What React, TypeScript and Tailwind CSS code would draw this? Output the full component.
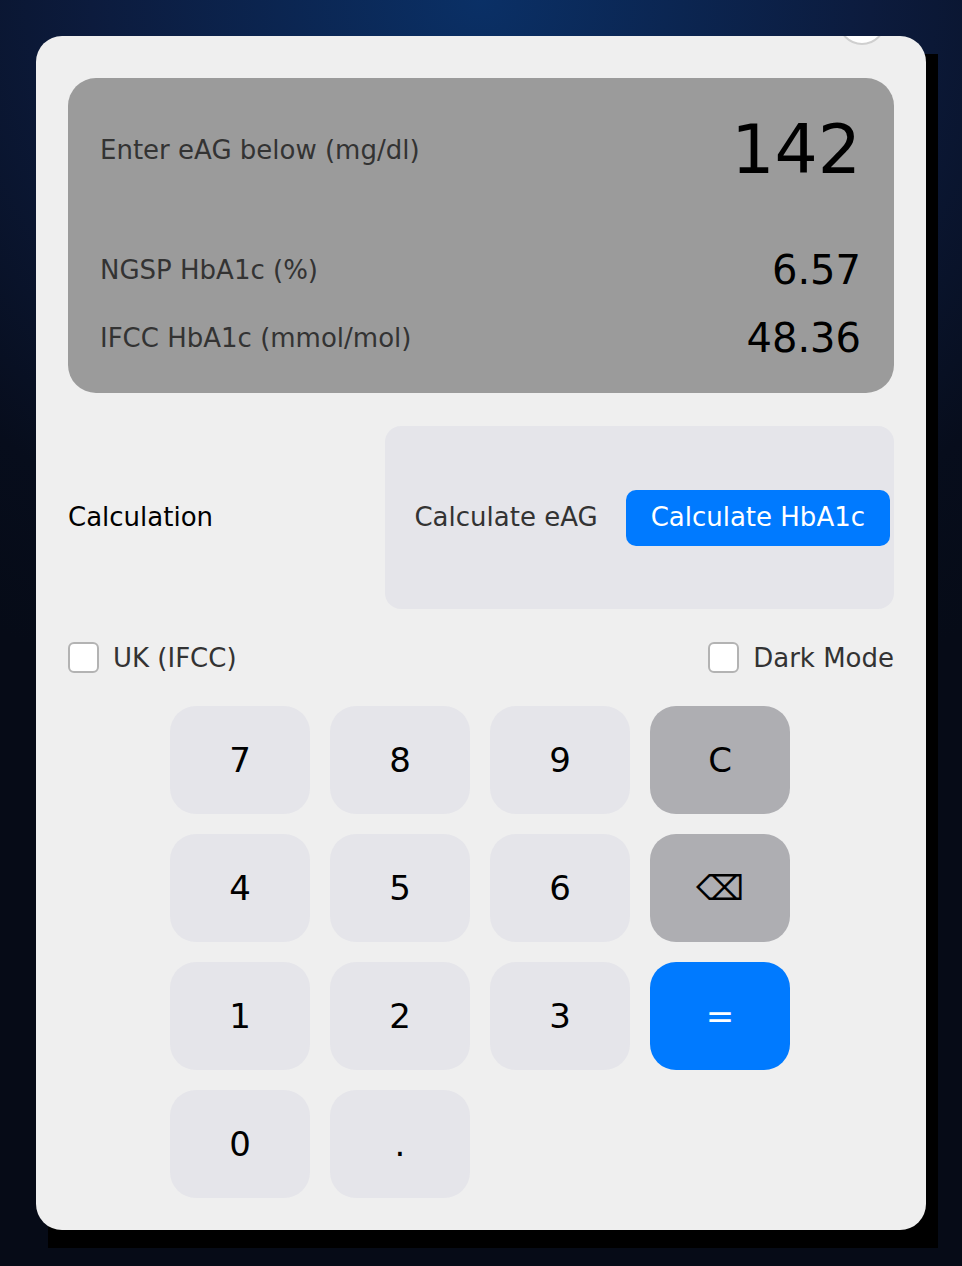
import { useState } from 'react';

const keys = ['7', '8', '9', 'C', '4', '5', '6', '⌫', '1', '2', '3', '=', '0', '.'];

export default function App() {
  const [mode, setMode] = useState<'eag' | 'hba1c'>('hba1c');
  const [uk, setUk] = useState(false);
  const [dark, setDark] = useState(false);

  const keyClass = (k: string) => {
    if (k === 'C' || k === '⌫') return 'bg-[#aeaeb2] text-black';
    if (k === '=') return 'bg-[#007aff] text-white';
    return 'bg-[#e5e5ea] text-black';
  };

  return (
    <div className="min-h-screen w-full bg-[radial-gradient(ellipse_90%_60%_at_50%_0%,#0a3066_0%,#0c1b3d_45%,#070d1c_80%,#060b17_100%)] pt-[36px] pb-[18px] font-['DejaVu_Sans',sans-serif]">
      <div className="relative mx-auto w-[890px]">
        {/* hard shadow block */}
        <div className="absolute left-[12px] top-[18px] h-full w-full bg-black" />

        <div className="relative overflow-hidden rounded-[26px] bg-[#efefef] px-[32px] pt-[42px] pb-[32px]">
          <div className="absolute right-[40px] top-[-39px] h-12 w-12 rounded-full border-2 border-[#cfcfcf] bg-white" />

          {/* display */}
          <div className="rounded-[28px] bg-[#9b9b9b] pl-[32px] pr-[33px] pt-[22px] pb-[30px]">
            <div className="flex h-[100px] items-center justify-between">
              <span className="text-[26px] text-[#333]">Enter eAG below (mg/dl)</span>
              <span className="text-[68px] leading-none text-black">142</span>
            </div>
            <div className="mt-[45px] flex h-[50px] items-center justify-between">
              <span className="text-[26px] text-[#333]">NGSP HbA1c (%)</span>
              <span className="text-[40px] leading-none text-black">6.57</span>
            </div>
            <div className="mt-[18px] flex h-[50px] items-center justify-between">
              <span className="text-[26px] text-[#333]">IFCC HbA1c (mmol/mol)</span>
              <span className="text-[40px] leading-none text-black">48.36</span>
            </div>
          </div>

          {/* calculation */}
          <div className="mt-[33px] flex items-center justify-between">
            <span className="text-[26px] text-black">Calculation</span>
            <div className="flex h-[183px] items-center gap-[3px] rounded-[16px] bg-[#e5e5ea] px-[4px]">
              <button
                onClick={() => setMode('eag')}
                className={`h-[56px] rounded-[10px] px-[25px] text-[26px] ${mode === 'eag' ? 'bg-[#007aff] text-white' : 'text-[#333]'}`}
              >
                Calculate eAG
              </button>
              <button
                onClick={() => setMode('hba1c')}
                className={`h-[56px] rounded-[10px] px-[25px] text-[26px] ${mode === 'hba1c' ? 'bg-[#007aff] text-white' : 'text-[#333]'}`}
              >
                Calculate HbA1c
              </button>
            </div>
          </div>

          {/* options */}
          <div className="mt-[33px] flex h-[31px] items-center justify-between leading-none">
            <label className="flex items-center gap-[14px] text-[26px] text-[#333]">
              <span
                onClick={() => setUk(!uk)}
                className={`h-[31px] w-[31px] rounded-[6px] border-2 border-[#b3b3b3] ${uk ? 'bg-[#007aff]' : 'bg-white'}`}
              />
              UK (IFCC)
            </label>
            <label className="flex items-center gap-[14px] text-[26px] text-[#333]">
              <span
                onClick={() => setDark(!dark)}
                className={`h-[31px] w-[31px] rounded-[6px] border-2 border-[#b3b3b3] ${dark ? 'bg-[#007aff]' : 'bg-white'}`}
              />
              Dark Mode
            </label>
          </div>

          {/* keypad */}
          <div className="ml-[102px] mt-[33px] grid w-[620px] grid-cols-4 gap-[20px]">
            {keys.map((k) => (
              <button
                key={k}
                className={`flex h-[108px] items-center justify-center rounded-[26px] text-[34px] ${keyClass(k)}`}
              >
                {k}
              </button>
            ))}
          </div>
        </div>
      </div>
    </div>
  );
}
